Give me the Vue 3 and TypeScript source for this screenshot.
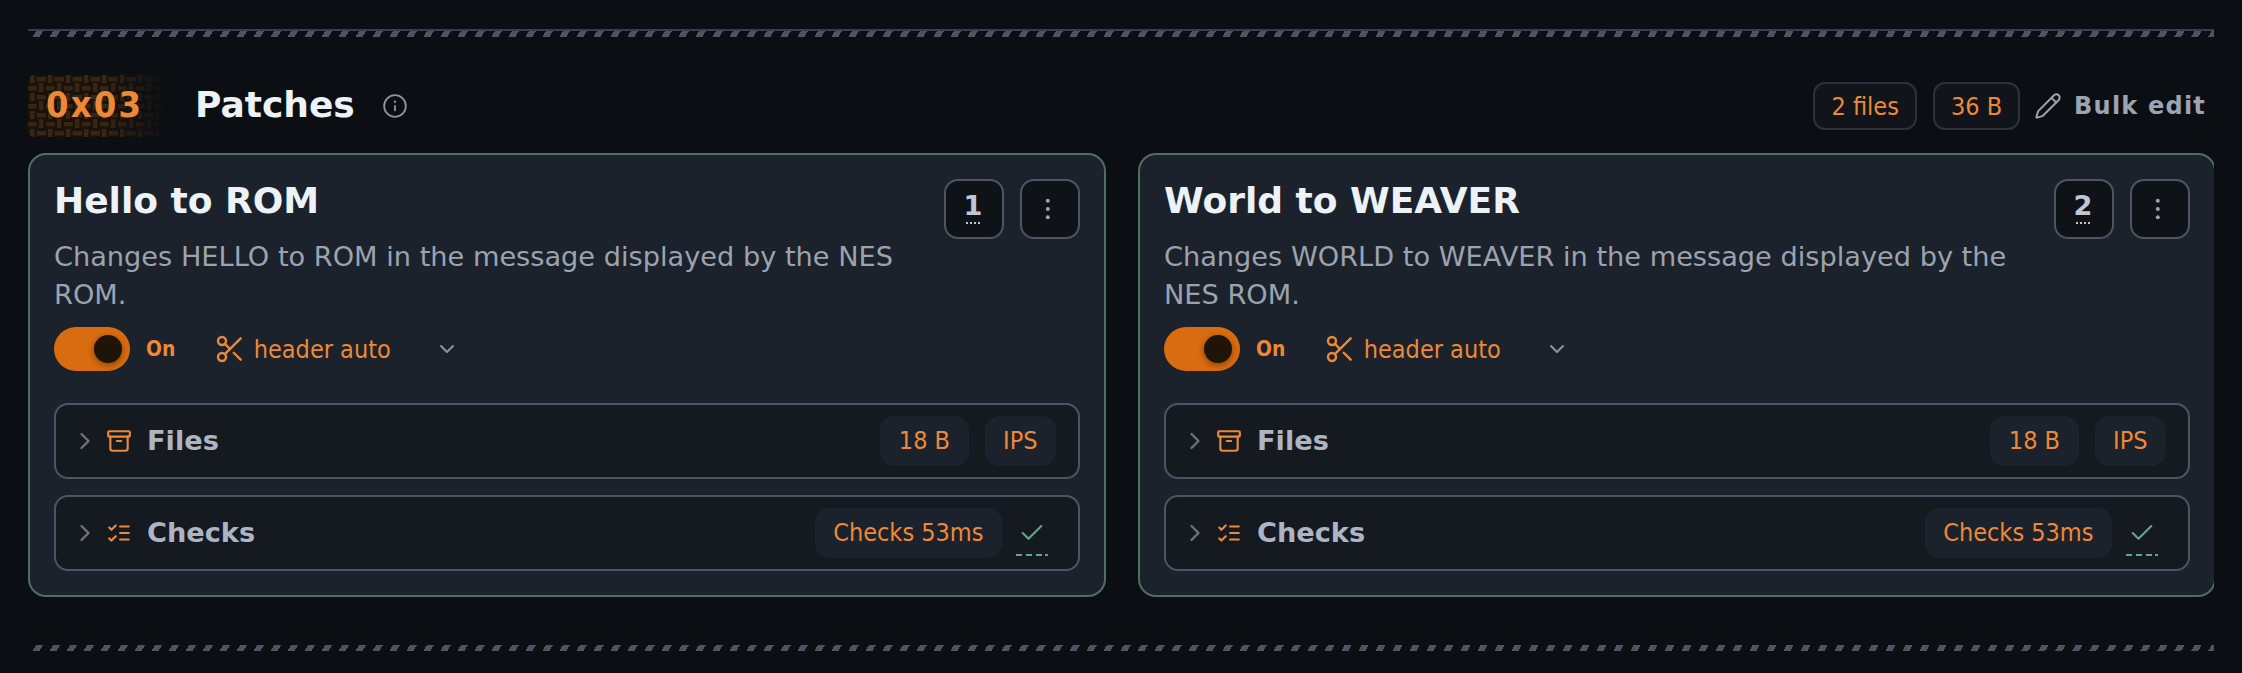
<script setup lang="ts">
interface Card { title: string; desc: string; num: number }
const cards: Card[] = [
  { title: 'Hello to ROM', desc: 'Changes HELLO to ROM in the message displayed by the NES ROM.', num: 1 },
  { title: 'World to WEAVER', desc: 'Changes WORLD to WEAVER in the message displayed by the NES ROM.', num: 2 },
]
</script>

<template>
  <div class="page">
    <div class="rule lined"></div>
    <header class="head">
      <div class="head-left">
        <span class="hex">
          <svg class="weave" width="140" height="62" aria-hidden="true">
            <defs>
              <pattern id="basket" width="18" height="18" patternUnits="userSpaceOnUse">
                <rect x="8.7" y="2" width="9.3" height="4.4" />
                <rect x="2" y="0" width="4.4" height="8" />
                <rect x="0" y="11" width="8.7" height="4.4" />
                <rect x="11" y="8" width="4.4" height="9" />
              </pattern>
            </defs>
            <rect class="weave-base" width="140" height="62" rx="6" />
            <rect width="140" height="62" rx="6" fill="url(#basket)" />
          </svg>
          <span class="hex-text">0x03</span>
        </span>
        <h2 class="title">Patches</h2>
        <svg class="info" viewBox="0 0 24 24" fill="none" stroke="currentColor" stroke-width="1.7" stroke-linecap="round" stroke-linejoin="round"><circle cx="12" cy="12" r="10" /><path d="M12 16v-4" /><path d="M12 8h.01" stroke-width="2.2" /></svg>
      </div>
      <div class="head-right">
        <span class="chip">2 files</span>
        <span class="chip">36 B</span>
        <button class="bulk">
          <svg viewBox="0 0 24 24" fill="none" stroke="currentColor" stroke-width="1.7" stroke-linecap="round" stroke-linejoin="round"><path d="M21.174 6.812a1 1 0 0 0-3.986-3.987L3.842 16.174a2 2 0 0 0-.5.83l-1.321 4.352a.5.5 0 0 0 .623.622l4.353-1.32a2 2 0 0 0 .83-.497z" /><path d="m15 5 4 4" /></svg>
          <span>Bulk edit</span>
        </button>
      </div>
    </header>

    <div class="grid">
      <article v-for="c in cards" :key="c.num" class="card">
        <div class="card-top">
          <div class="card-main">
            <h3 class="card-title">{{ c.title }}</h3>
            <p class="card-desc">{{ c.desc }}</p>
          </div>
          <div class="card-btns">
            <button class="sq num">
              <span class="num-text">{{ c.num }}</span>
              <span class="num-dots"></span>
            </button>
            <button class="sq">
              <svg viewBox="0 0 24 24" fill="currentColor"><circle cx="9.8" cy="3.8" r="2" /><circle cx="9.8" cy="12" r="2" /><circle cx="9.8" cy="20.2" r="2" /></svg>
            </button>
          </div>
        </div>
        <div class="controls">
          <span class="toggle"><span class="knob"></span></span>
          <span class="on">On</span>
          <span class="select">
            <svg class="scissors" viewBox="0 0 24 24" fill="none" stroke="currentColor" stroke-width="1.8" stroke-linecap="round" stroke-linejoin="round"><circle cx="6" cy="6" r="3" /><path d="M8.12 8.12 12 12" /><path d="M20 4 8.12 15.88" /><circle cx="6" cy="18" r="3" /><path d="M14.8 14.8 20 20" /></svg>
            <span>header auto</span>
            <svg class="caret" viewBox="0 0 24 24" fill="none" stroke="currentColor" stroke-width="2" stroke-linecap="round" stroke-linejoin="round"><path d="m6 9 6 6 6-6" /></svg>
          </span>
        </div>
        <div class="row">
          <svg class="chev" viewBox="0 0 24 24" fill="none" stroke="currentColor" stroke-width="2" stroke-linecap="round" stroke-linejoin="round"><path d="m9 18 6-6-6-6" /></svg>
          <svg class="row-icon" viewBox="0 0 24 24" fill="none" stroke="currentColor" stroke-width="2" stroke-linecap="round" stroke-linejoin="round"><rect x="2" y="3" width="20" height="5" rx="1" /><path d="M4 8v11a2 2 0 0 0 2 2h12a2 2 0 0 0 2-2V8" /><path d="M10 12h4" /></svg>
          <span class="row-label">Files</span>
          <span class="pills">
            <span class="pill">18 B</span>
            <span class="pill">IPS</span>
          </span>
        </div>
        <div class="row">
          <svg class="chev" viewBox="0 0 24 24" fill="none" stroke="currentColor" stroke-width="2" stroke-linecap="round" stroke-linejoin="round"><path d="m9 18 6-6-6-6" /></svg>
          <svg class="row-icon" viewBox="0 0 24 24" fill="none" stroke="currentColor" stroke-width="2" stroke-linecap="round" stroke-linejoin="round"><path d="m3 7 2 2 4-4" /><path d="m3 17 2 2 4-4" /><path d="M13 6h8" /><path d="M13 12h8" /><path d="M13 18h8" /></svg>
          <span class="row-label">Checks</span>
          <span class="pills">
            <span class="pill">Checks 53ms</span>
            <span class="ok">
              <svg viewBox="0 0 24 24" fill="none" stroke="currentColor" stroke-width="1.8" stroke-linecap="round" stroke-linejoin="round"><path d="M20 6 9 17l-5-5" /></svg>
              <span class="ok-dash"></span>
            </span>
          </span>
        </div>
      </article>
    </div>
    <div class="rule bottom"></div>
  </div>
</template>

<style>
html, body { margin: 0; background: #0b0e13; }
</style>

<style scoped>
.page {
  box-sizing: border-box;
  width: 2242px;
  height: 673px;
  padding: 29px 28px 0;
  overflow: hidden;
  background: #0b0e13;
  font-family: "DejaVu Sans", sans-serif;
}
.rule {
  height: 6px;
  background: repeating-linear-gradient(120deg, transparent 0 6.93px, #4b5563 6.93px 12.99px, transparent 12.99px 14.72px);
}
.rule.lined {
  height: 8px;
  box-sizing: border-box;
  border-top: 2px solid #363f4c;
  background-clip: content-box;
}
.head { display: flex; justify-content: space-between; align-items: center; height: 62px; margin-top: 38px; }
.head-left, .head-right { display: flex; align-items: center; }
.hex {
  position: relative;
  width: 140px;
  height: 62px;
  display: flex;
  align-items: center;
}
.weave {
  position: absolute;
  inset: 0;
  fill: #3a2511;
  -webkit-mask-image: linear-gradient(90deg, #000 55%, transparent 100%);
  mask-image: linear-gradient(90deg, #000 55%, transparent 100%);
}
.weave-base { fill: #17120e; }
.hex-text {
  position: relative;
  margin: -4px 0 0 18px;
  font-family: "DejaVu Sans Condensed", "DejaVu Sans", sans-serif;
  font-stretch: condensed;
  font-size: 36px;
  font-weight: 700;
  letter-spacing: 2.2px;
  color: #ed8936;
}
.title { margin: -3px 0 0 27px; font-size: 36px; font-weight: 700; color: #edf2f7; }
.info { width: 26px; height: 26px; margin-left: 27px; color: #8a94a6; }
.chip {
  box-sizing: border-box;
  height: 48px;
  padding: 0 16px;
  display: flex;
  align-items: center;
  border: 2px solid #2b323d;
  border-radius: 12px;
  color: #ed8936;
  font-family: "DejaVu Sans Condensed", "DejaVu Sans", sans-serif;
  font-stretch: condensed;
  font-size: 25px;
  background: #11151b;
  margin-left: 16px;
}
.bulk {
  display: flex;
  align-items: center;
  gap: 12px;
  margin-left: 14px;
  background: none;
  border: none;
  padding: 0 8px 0 0;
  font: 700 24px "DejaVu Sans", sans-serif;
  letter-spacing: 1.2px;
  color: #9ca3b2;
}
.bulk svg { width: 28px; height: 28px; }
.grid { display: grid; grid-template-columns: 1078px 1078px; column-gap: 32px; margin-top: 16px; overflow: hidden; }
.card {
  box-sizing: border-box;
  height: 444px;
  padding: 24px;
  border: 2px solid #4e6d63;
  border-radius: 18px;
  background: #1b222b;
}
.card-top { display: flex; gap: 16px; }
.card-main { flex: 1; }
.card-title { margin: 0; font-size: 36px; font-weight: 700; color: #edf2f7; line-height: 44px; }
.card-desc { margin: 15px 0 0; font-size: 27.2px; line-height: 38px; color: #9ca3af; }
.card-btns { display: flex; gap: 16px; flex: none; }
.sq {
  box-sizing: border-box;
  width: 60px;
  height: 60px;
  padding: 0;
  display: flex;
  flex-direction: column;
  align-items: center;
  justify-content: center;
  border: 2px solid #4b5563;
  border-radius: 14px;
  background: #0f1318;
  color: #9ca3af;
}
.sq svg { width: 24px; height: 24px; }
.num-text {
  font: 700 27.2px/28px "DejaVu Sans", sans-serif;
  color: #c0c7d4;
  margin: -2px 2px 0 0;
}
.num-dots {
  width: 14px;
  height: 2px;
  margin: 2px 2px 0 0;
  background: repeating-linear-gradient(90deg, #c0c7d4 0 2px, transparent 2px 4px);
}
.controls { display: flex; align-items: center; height: 44px; margin-top: 13px; }
.toggle { width: 76px; height: 44px; border-radius: 22px; background: #d96b10; display: flex; align-items: center; justify-content: flex-end; padding-right: 8px; box-sizing: border-box; }
.knob { width: 28px; height: 28px; border-radius: 50%; background: #1f1408; box-shadow: 0 2px 6px rgba(0,0,0,.4); }
.on {
  margin-left: 16px;
  font-family: "DejaVu Sans Condensed", "DejaVu Sans", sans-serif;
  font-stretch: condensed;
  font-size: 20.8px;
  font-weight: 700;
  color: #ed8936;
}
.select {
  display: flex;
  align-items: center;
  margin-left: 39px;
  color: #ed8936;
  font-family: "DejaVu Sans Condensed", "DejaVu Sans", sans-serif;
  font-stretch: condensed;
  font-size: 25px;
  gap: 7.5px;
}
.scissors { width: 32px; height: 32px; }
.caret { width: 24px; height: 24px; color: #8a94a6; margin-left: 37px; }
.row {
  box-sizing: border-box;
  height: 76px;
  margin-top: 16px;
  padding: 0 22px 0 15px;
  display: flex;
  align-items: center;
  border: 2px solid #4b5563;
  border-radius: 14px;
  background: #151920;
}
.controls + .row { margin-top: 32px; }
.chev { width: 28px; height: 28px; color: #6b7280; }
.row-icon { width: 26px; height: 26px; margin-left: 7px; color: #ed8936; }
.row-label { margin: -2px 0 0 15px; font-size: 27.2px; font-weight: 700; color: #adb4c3; }
.pills { margin-left: auto; display: flex; align-items: center; gap: 16px; }
.pill {
  box-sizing: border-box;
  height: 50px;
  padding: 0 18.5px 2px;
  display: flex;
  align-items: center;
  border-radius: 14px;
  background: #1b222b;
  font-family: "DejaVu Sans Condensed", "DejaVu Sans", sans-serif;
  font-stretch: condensed;
  font-size: 25px;
  color: #ed8936;
}
.ok { width: 32px; display: flex; flex-direction: column; align-items: center; gap: 7px; margin: 8px 8px 0 -2px; color: #5fa883; }
.ok svg { width: 28px; height: 28px; }
.ok-dash { width: 32px; height: 2px; background: repeating-linear-gradient(90deg, #5fa883 0 6px, transparent 6px 9.8px); }
.bottom { margin-top: 48px; }
</style>
